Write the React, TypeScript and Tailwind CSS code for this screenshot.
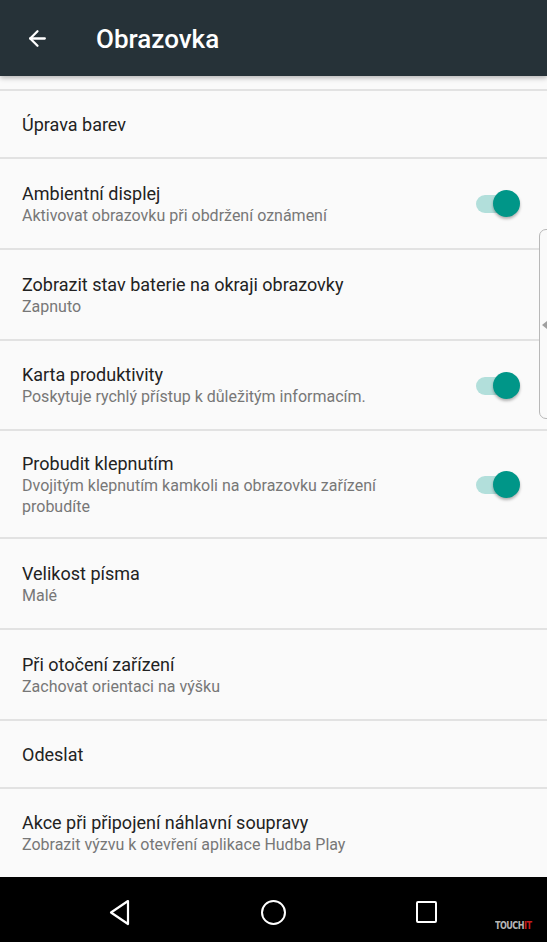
import { ArrowLeft } from "lucide-react";

type Item = {
  title: string;
  subtitle?: string;
  toggle?: boolean;
  h: string;
};

const items: Item[] = [
  { title: "Úprava barev", h: "h-[66px]" },
  {
    title: "Ambientní displej",
    subtitle: "Aktivovat obrazovku při obdržení oznámení",
    toggle: true,
    h: "h-[89px]",
  },
  {
    title: "Zobrazit stav baterie na okraji obrazovky",
    subtitle: "Zapnuto",
    h: "h-[89px]",
  },
  {
    title: "Karta produktivity",
    subtitle: "Poskytuje rychlý přístup k důležitým informacím.",
    toggle: true,
    h: "h-[88px]",
  },
  {
    title: "Probudit klepnutím",
    subtitle: "Dvojitým klepnutím kamkoli na obrazovku zařízení probudíte",
    toggle: true,
    h: "h-[106px]",
  },
  { title: "Velikost písma", subtitle: "Malé", h: "h-[89px]" },
  {
    title: "Při otočení zařízení",
    subtitle: "Zachovat orientaci na výšku",
    h: "h-[89px]",
  },
  { title: "Odeslat", h: "h-[66px]" },
  {
    title: "Akce při připojení náhlavní soupravy",
    subtitle: "Zobrazit výzvu k otevření aplikace Hudba Play",
    h: "h-[88px]",
  },
];

function Divider() {
  return <div className="h-[2px] bg-[#e2e2e2]" />;
}

function Toggle() {
  return (
    <div className="relative w-[44px] h-[27px] shrink-0">
      <div className="absolute left-0 top-[5px] w-[38px] h-[18px] rounded-full bg-[#b2dfdb]" />
      <div className="absolute right-0 top-0 w-[27px] h-[27px] rounded-full bg-[#009688] shadow-[0_2px_3px_rgba(0,0,0,0.3)]" />
    </div>
  );
}

export default function App() {
  return (
    <div
      className="relative w-[547px] h-[942px] overflow-hidden bg-[#fafafa] flex flex-col"
      style={{ fontFamily: "Roboto, 'Noto Sans', sans-serif" }}
    >
      <header className="relative z-10 h-[76px] shrink-0 bg-[#263238] flex items-center shadow-[0_2px_5px_rgba(0,0,0,0.28)]">
        <div className="w-[96px] pl-[25px] flex items-center">
          <ArrowLeft className="text-white" size={25} strokeWidth={2.2} />
        </div>
        <h1 className="text-white text-[26px] font-medium pt-[2px]">
          Obrazovka
        </h1>
      </header>

      <div className="h-[13px] shrink-0" />
      <Divider />

      {items.map((it, i) => (
        <div key={it.title}>
          <div
            className={`${it.h} flex items-center justify-between pl-[22px] pr-[27px]`}
          >
            <div className="flex flex-col max-w-[400px]">
              <span className="text-[18px] leading-[23px] text-[#222222]">
                {it.title}
              </span>
              {it.subtitle && (
                <span className="text-[16px] leading-[21px] text-[#777777]">
                  {it.subtitle}
                </span>
              )}
            </div>
            {it.toggle && <Toggle />}
          </div>
          {i < items.length - 1 && <Divider />}
        </div>
      ))}

      <nav className="mt-auto h-[65px] shrink-0 bg-black relative flex items-center">
        <div className="absolute left-[108px] top-[22px]">
          <svg width="24" height="27" viewBox="0 0 24 27">
            <path
              d="M20 2 L3 13.5 L20 25 Z"
              fill="none"
              stroke="white"
              strokeWidth="2.2"
              strokeLinejoin="round"
            />
          </svg>
        </div>
        <div className="absolute left-[261px] top-[23px] w-[25px] h-[25px] rounded-full border-[2.2px] border-white" />
        <div className="absolute left-[416px] top-[24px] w-[21px] h-[22px] rounded-[2px] border-[2.2px] border-white" />
        <div
          className="absolute left-[495px] top-[44px] text-[10px] font-bold tracking-[-0.6px] leading-none origin-left scale-x-90"
          style={{ fontFamily: "'DejaVu Sans Condensed', 'Liberation Sans', sans-serif" }}
        >
          <span className="text-[#b5b5b5]">TOUCH</span>
          <span className="text-[#c81e1e]">IT</span>
        </div>
      </nav>

      <div className="absolute left-[539px] top-[229px] w-[14px] h-[190px] rounded-l-[7px] border border-[#b8b8b8] bg-[#fafafa]">
        <svg
          className="absolute left-[2px] top-[91px]"
          width="5"
          height="8"
          viewBox="0 0 5 8"
        >
          <path d="M5 0 L0 4 L5 8 Z" fill="#a0a0a0" />
        </svg>
      </div>
    </div>
  );
}
